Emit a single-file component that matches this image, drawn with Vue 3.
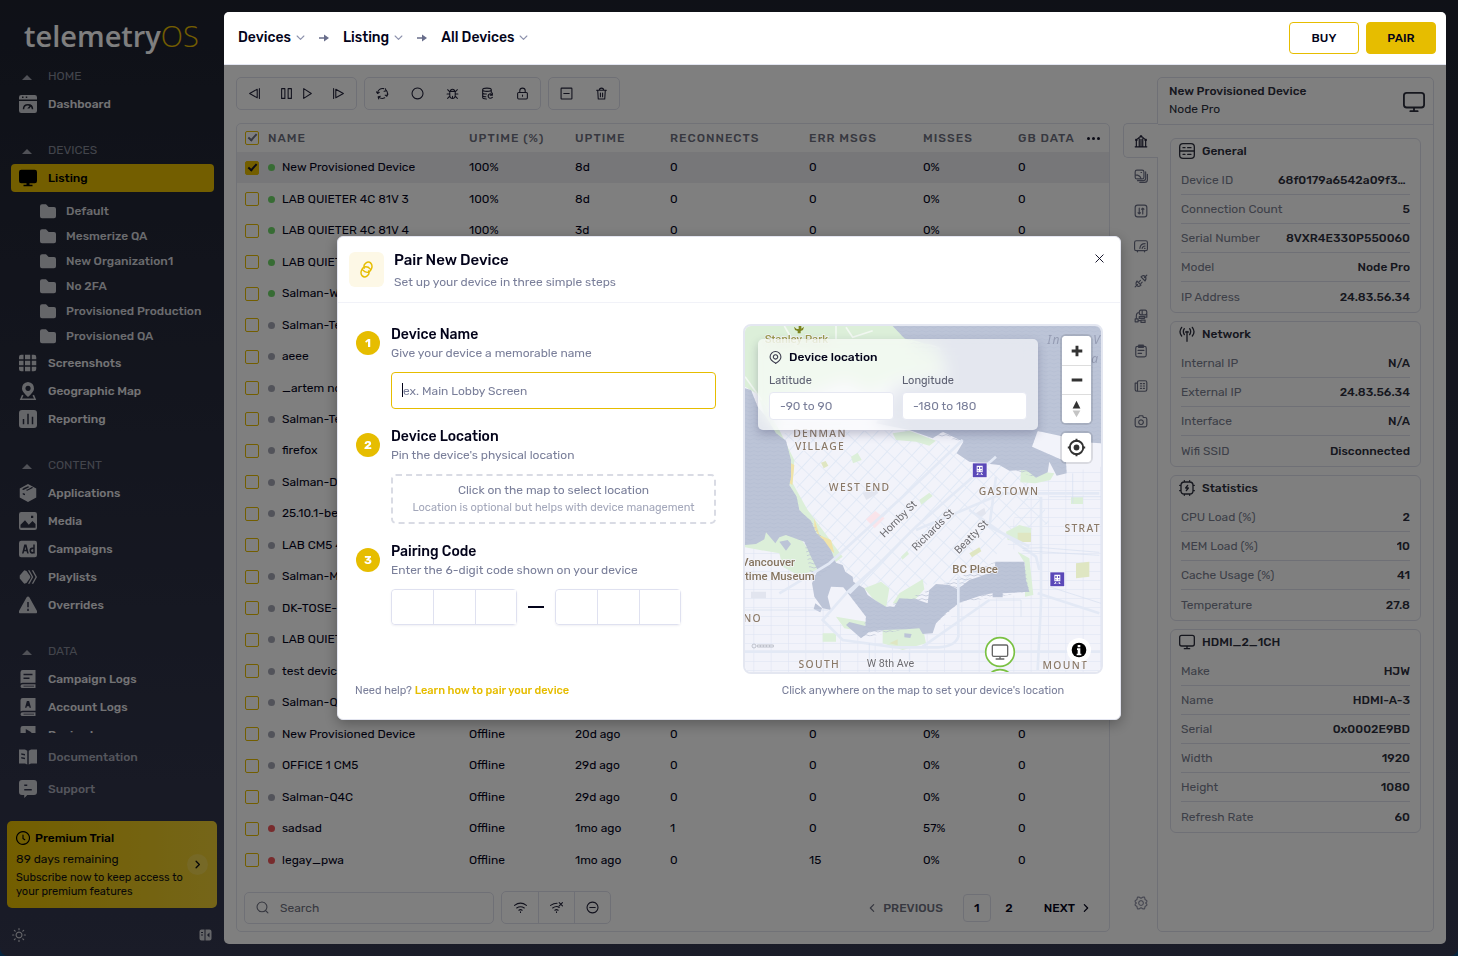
<template>
  <div class="app">
    <aside class="sidebar">
      <a href="#" class="logo">telemetry<span class="logo_os">OS</span></a>
      <nav class="nav">
        <section v-for="group in groups" :key="group.title" class="nav_group">
          <h2 class="nav_title">
            <span class="caret"></span>{{ group.title }}
          </h2>
          <template v-for="item in group.items" :key="item.label">
            <a href="#" class="nav_item" :class="{ active: item.active }">
              <svg class="nav_icon" viewBox="0 0 24 24"><path :d="solid[item.icon]" /></svg>
              {{ item.label }}
            </a>
            <div v-if="item.children" class="nav_children">
              <a v-for="child in item.children" :key="child" href="#" class="nav_child">
                <svg class="folder" viewBox="0 0 24 24"><path :d="solid.folder" /></svg>
                {{ child }}
              </a>
            </div>
          </template>
        </section>
      </nav>
      <div class="nav_bottom">
        <a href="#" class="nav_item muted">
          <svg class="nav_icon" viewBox="0 0 24 24"><path :d="solid.docs" /></svg>
          Documentation
        </a>
        <a href="#" class="nav_item muted">
          <svg class="nav_icon" viewBox="0 0 24 24"><path :d="solid.support" /></svg>
          Support
        </a>
      </div>
      <a href="#" class="trial">
        <span class="trial_text">
          <span class="trial_title">
            <svg class="line_icon trial_clock" viewBox="0 0 24 24"><path :d="line.clock" /></svg>
            Premium Trial
          </span>
          <span class="trial_days">89 days remaining</span>
          <span class="trial_note">Subscribe now to keep access to your premium features</span>
        </span>
        <span class="trial_arrow">
          <svg class="line_icon" viewBox="0 0 24 24"><path d="M9 5l7 7-7 7" /></svg>
        </span>
      </a>
      <div class="sidebar_footer">
        <button class="plain_btn" aria-label="Theme">
          <svg class="line_icon sun" viewBox="0 0 24 24"><path :d="line.sun" /></svg>
        </button>
        <button class="plain_btn" aria-label="Collapse sidebar">
          <svg class="collapse" viewBox="0 0 24 24"><path :d="solid.collapse" /></svg>
        </button>
      </div>
    </aside>

    <main class="main">
      <header class="topbar">
        <div class="crumbs">
          <template v-for="(crumb, i) in ['Devices', 'Listing', 'All Devices']" :key="crumb">
            <svg v-if="i > 0" class="crumb_arrow" viewBox="0 0 12 12"><path d="M1 5.2h5V2.500L11 6 6 9.500V6.800H1z" /></svg>
            <button class="plain_btn crumb">
              {{ crumb }}
              <svg class="line_icon crumb_chevron" viewBox="0 0 24 24"><path d="M3 8l9 9 9-9" /></svg>
            </button>
          </template>
        </div>
        <div class="actions">
          <button class="btn btn_outline">BUY</button>
          <button class="btn">PAIR</button>
        </div>
      </header>

      <div class="content">
        <div class="list_col">
          <div class="toolbar">
            <div v-for="(tools, i) in toolbar" :key="i" class="tool_group">
              <button v-for="tool in tools" :key="tool.join()" class="plain_btn tool" :class="{ wide: tool.length > 1 }" :aria-label="tool.join(' ')">
                <svg v-for="name in tool" :key="name" class="line_icon" viewBox="0 0 24 24"><path :d="line[name]" /></svg>
              </button>
            </div>
          </div>

          <div class="list">
            <div class="table_wrap">
              <table class="table">
                <thead>
                  <tr>
                    <th class="col_check"><input type="checkbox" class="check partial" checked aria-label="Select all"></th>
                    <th>NAME</th>
                    <th class="col_pct">UPTIME (%)</th>
                    <th class="col_up">UPTIME</th>
                    <th class="col_rec">RECONNECTS</th>
                    <th class="col_err">ERR MSGS</th>
                    <th class="col_miss">MISSES</th>
                    <th class="col_gb">GB DATA</th>
                    <th class="col_more">
                      <button class="plain_btn more" aria-label="Columns"><i></i><i></i><i></i></button>
                    </th>
                  </tr>
                </thead>
                <tbody>
                  <tr v-for="(row, i) in devices" :key="i" :class="{ selected: i === 0 }">
                    <td><input type="checkbox" class="check" :checked="i === 0" :aria-label="'Select ' + row[0]"></td>
                    <td><span class="status" :class="row[1]"></span>{{ row[0] }}</td>
                    <td v-for="(cell, c) in row.slice(2)" :key="c">{{ cell }}</td>
                    <td></td>
                  </tr>
                </tbody>
              </table>
            </div>
            <div class="list_footer">
              <label class="search">
                <svg class="line_icon" viewBox="0 0 24 24"><path :d="line.search" /></svg>
                <input type="search" placeholder="Search" aria-label="Search">
              </label>
              <div class="tool_group filters">
                <button v-for="name in ['wifi', 'wifiOff', 'minusCircle']" :key="name" class="plain_btn tool" :aria-label="name">
                  <svg class="line_icon" viewBox="0 0 24 24"><path :d="line[name]" /></svg>
                </button>
              </div>
              <div class="pager">
                <button class="plain_btn prev">
                  <svg class="line_icon" viewBox="0 0 24 24"><path d="M16 4l-8 8 8 8" /></svg>
                  PREVIOUS
                </button>
                <button class="plain_btn page current">1</button>
                <button class="plain_btn page">2</button>
                <button class="plain_btn next">
                  NEXT
                  <svg class="line_icon" viewBox="0 0 24 24"><path d="M8 4l8 8-8 8" /></svg>
                </button>
              </div>
            </div>
          </div>
        </div>

        <div class="detail">
          <div class="tabs">
            <button v-for="(name, i) in tabs" :key="name" class="plain_btn tab" :class="{ active: i === 0 }" :aria-label="name">
              <svg class="line_icon" viewBox="0 0 24 24"><path :d="line[name]" /></svg>
            </button>
            <button class="plain_btn tab tab_last" aria-label="settings">
              <svg class="line_icon" viewBox="0 0 24 24"><path :d="line.gear" /></svg>
            </button>
          </div>
          <div class="panel">
            <div class="panel_head">
              <div>
                <div class="panel_name">New Provisioned Device</div>
                <div class="panel_type">Node Pro</div>
              </div>
              <svg class="line_icon panel_monitor" viewBox="0 0 24 24"><path :d="line.monitor" /></svg>
            </div>
            <div class="cards">
              <section v-for="card in cards" :key="card.title" class="card">
                <h3 class="card_title">
                  <svg class="line_icon" viewBox="0 0 24 24"><path :d="line[card.icon]" /></svg>
                  {{ card.title }}
                </h3>
                <dl class="card_rows">
                  <div v-for="row in card.rows" :key="row[0]" class="card_row">
                    <dt>{{ row[0] }}</dt>
                    <dd>{{ row[1] }}</dd>
                  </div>
                </dl>
              </section>
            </div>
          </div>
        </div>
      </div>
    </main>

    <div class="overlay">
      <div class="modal" role="dialog" aria-labelledby="modal-title">
        <header class="modal_head">
          <span class="modal_icon">
            <svg class="line_icon" viewBox="0 0 24 24"><path :d="line.link" /></svg>
          </span>
          <div class="modal_heading">
            <h1 id="modal-title" class="modal_title">Pair New Device</h1>
            <p class="modal_sub">Set up your device in three simple steps</p>
          </div>
          <button class="plain_btn modal_close" aria-label="Close">
            <svg class="line_icon" viewBox="0 0 24 24"><path d="M4 4l16 16M20 4L4 20" /></svg>
          </button>
        </header>
        <div class="modal_body">
          <div class="steps">
            <section class="step">
              <span class="step_num">1</span>
              <div class="step_main">
                <label class="step_title" for="device-name">Device Name</label>
                <p class="step_sub">Give your device a memorable name</p>
                <div class="name_field">
                  <input id="device-name" v-model="deviceName" type="text" placeholder="ex. Main Lobby Screen">
                </div>
              </div>
            </section>
            <section class="step">
              <span class="step_num">2</span>
              <div class="step_main">
                <h2 class="step_title">Device Location</h2>
                <p class="step_sub">Pin the device's physical location</p>
                <div class="drop">
                  <div class="drop_title">Click on the map to select location</div>
                  <div class="drop_note">Location is optional but helps with device management</div>
                </div>
              </div>
            </section>
            <section class="step">
              <span class="step_num">3</span>
              <div class="step_main">
                <h2 class="step_title">Pairing Code</h2>
                <p class="step_sub">Enter the 6-digit code shown on your device</p>
                <div class="code">
                  <div class="code_group">
                    <input v-for="n in 3" :key="n" type="text" maxlength="1" :aria-label="'Digit ' + n">
                  </div>
                  <span class="code_dash"></span>
                  <div class="code_group">
                    <input v-for="n in 3" :key="n" type="text" maxlength="1" :aria-label="'Digit ' + (n + 3)">
                  </div>
                </div>
              </div>
            </section>
            <p class="help">Need help? <a href="#">Learn how to pair your device</a></p>
          </div>

          <div class="map_col">
            <div class="map">
              <svg class="map_canvas" viewBox="27 48 1068 1038" preserveAspectRatio="xMidYMid slice">
                <defs>
                  <pattern id="waves" width="24" height="12" patternUnits="userSpaceOnUse">
                    <path d="M0 4q6-4 12 0t12 0" fill="none" stroke="#b5bed2" stroke-width="2" />
                  </pattern>
                  <pattern id="diag" width="31" height="42" patternUnits="userSpaceOnUse" patternTransform="rotate(43)">
                    <path d="M0 1h31M1 0v42" fill="none" stroke="#dfe8f5" stroke-width="3" />
                  </pattern>
                  <pattern id="ortho" width="52" height="27" patternUnits="userSpaceOnUse">
                    <path d="M0 1h52M1 0v27" fill="none" stroke="#dfe5f3" stroke-width="2" />
                  </pattern>
                </defs>
                <rect x="27" y="48" width="1068" height="1038" fill="#f2f3fa" />
                <path d="M27 700L130 690 230 760 280 920 380 985 600 970 680 880 880 850 870 750 800 690 900 500 1095 470V1086H27z" fill="url(#ortho)" />
                <path d="M120 370L520 360 680 420 900 510 940 640 800 690 770 760 670 830 580 820 450 890 340 800 300 740 190 570 165 450z" fill="url(#diag)" />
                <g fill="#dcefd9">
                  <path d="M27 48H480L610 120 630 190 480 210 400 250 330 210 100 300 60 250 27 230z" />
                  <path d="M60 240L130 360 175 450 170 520 215 600 320 740 300 755 190 600 150 500 110 380z" />
                  <path d="M27 700L120 640 190 680 240 750 250 780 185 795 140 770 130 730 27 712z" />
                  <path d="M470 370l50-8 80 30-20 15-40-12-60-5zM855 478l100 12-12 20-45 10-45-3zM385 835l50-20 25 20-10 60-40-30zM470 880l20-30 70-42 5 30-40 45zM440 955l120-5 10 50-70 20-60-20zM845 725l35 20 12 110-25 5 0-100zM300 920l90 15-5 30-60-10zM550 570l30-22 10 10-34 26zM495 740l18-17 6 9-20 17zM1005 562h36v20h-36zM260 970h40v25h-40zM810 665l40-20 35 10v40l-70-5zM345 440l20-12 12 22-26 10z" />
                </g>
                <path d="M235 625l15 50 35 15 10 40-30-25-30-50zM165 460l10 5-6 60-8-5z" fill="#f0e3a9" />
                <path d="M845 668h40v28h-40zM1020 760l40-5v45l-40 5zM700 730l30-18 6 12-28 18zM255 458l14-5 8 14-14 8zM460 1000l25-12v18z" fill="#dfe6c2" />
                <path d="M390 628l28-25 28 22-30 30z" fill="#fae4ea" />
                <path d="M715 613l30-20 5 18-22 14zM380 550l38-20 8 20-35 20zM45 845h45v20H45zM720 845h30v12h-30z" fill="#e2e5ef" />
                <g id="water">
                  <path d="M27 235L45 240 65 290 90 320 120 370 150 392 165 450V500L160 525 182 560 190 600 205 615 225 632 240 668 265 692 285 720 300 758 320 765 328 785 350 800 352 815 385 835 395 855 420 872 450 890H475L490 865 540 868 575 880 580 840 600 822 640 825 665 838 700 810 775 785 778 755H865L870 810 880 845 800 850V862H770V850L740 855 670 878 630 910 600 940 590 970 560 972 550 955 510 958 440 960 400 965 375 985 330 945 340 936 388 948 390 920 322 832 285 830 275 860 285 900 260 895 235 860 228 820 245 780 225 740 205 695 150 675 130 682 118 700 90 667 85 688 60 702 27 705z" fill="#bcc4d7" />
                  <path d="M470 48H1095V400L1068 398 905 363 888 410 990 455 992 490 962 497 940 455 935 487 900 503 870 480 820 482 790 465 700 455 662 430 682 395 620 365 590 385 520 360 420 340 480 230 640 200 610 110 505 85z" fill="#bcc4d7" />
                  <path d="M27 235L45 240 65 290 90 320 120 370 150 392 165 450V500L160 525 182 560 190 600 225 632 265 692 300 758 228 820 205 695 150 675 90 667 27 705zM470 48H1095V400L905 363 888 410 990 455 992 490 940 455 900 503 790 465 700 455 682 395 520 360 480 230 640 200 505 85zM450 890L580 840 778 755H865L880 845 670 878 600 940 375 985 390 920 322 832z" fill="url(#waves)" />
                  <path d="M130 695l25-5 10 12-15 20zM505 970l22 2-4 12-18-2zM238 880l20 15-5 12-20-10z" fill="#bcc4d7" />
                </g>
                <g fill="none" stroke="#e3e9f5" stroke-width="8">
                  <path d="M130 850l150-90 220-200 180-170M340 850l200-200 240-210M667 800v180q-10 30-60 32H480L320 990 260 930 330 850 420 770M915 560v320l-10 200M700 600l200 140 10 40M780 500l-20 150 120 60M905 850l185 60M760 870L560 1010M540 660l260-110h290M27 1025h1068" />
                </g>
                <g fill="none" stroke="#d7dff0" stroke-width="2">
                  <path d="M27 900h250M860 715l60-2 170 14M860 722l230 14M940 830l155 50M520 1025v60M1010 490v90M940 560h155M400 1000v86M760 870h95v50" />
                </g>
                <path d="M145 48l35 60 30 15M27 200l50 70M300 48v40M330 52l20 30 60-20" fill="none" stroke="#f2f8f2" stroke-width="5" />
                <g class="map_area" text-anchor="middle">
                  <text x="252" y="381">DENMAN</text>
                  <text x="252" y="419">VILLAGE</text>
                  <text x="371" y="542">WEST END</text>
                  <text x="819" y="555">GASTOWN</text>
                  <text x="1040" y="666">STRAT</text>
                  <text x="50" y="936">NO</text>
                  <text x="250" y="1075">SOUTH</text>
                  <text x="988" y="1078">MOUNT</text>
                </g>
                <g class="map_place">
                  <text x="86" y="98" class="map_park">Stanley Park</text>
                  <text x="16" y="767">Vancouver</text>
                  <text x="27" y="810">time Museum</text>
                  <text x="649" y="790">BC Place</text>
                </g>
                <g class="map_street">
                  <text transform="translate(445 684) rotate(-45)">Hornby St</text>
                  <text transform="translate(541 724) rotate(-45)">Richards St</text>
                  <text transform="translate(668 733) rotate(-45)">Beatty St</text>
                  <text x="392" y="1071">W 8th Ave</text>
                </g>
                <g class="map_water">
                  <text x="934" y="101">In</text>
                  <text x="1072" y="101">V</text>
                  <text x="1066" y="160">a</text>
                </g>
                <path d="M174 50l8 7h6V48h8v8l8-6-3 10-7 3v7h-9v-7l-8-3z" fill="#7c8420" />
                <g v-for="pin in [[709, 459], [942, 786]]" :key="pin[0]" :transform="`translate(${pin})`">
                  <rect width="44" height="44" fill="#5a48b8" stroke="#fff" stroke-width="2" />
                  <path d="M13 8h18v20H13zM16 12v6h4v-6zm8 0v6h4v-6zm-8 10v3h3v-3zm9 0v3h3v-3zM12 36l4-6h3l-2 3h10l-2-3h3l4 6h-4l-1-2H17l-1 2z" fill="#fff" fill-rule="evenodd" />
                </g>
                <circle cx="792" cy="1122" r="43" fill="#fff" stroke="#7ac142" stroke-width="5" />
                <circle cx="792" cy="1026" r="43" fill="#fff" stroke="#7ac142" stroke-width="5" />
                <path d="M773 1005h38q4 0 4 4v26q0 4-4 4h-38q-4 0-4-4v-26q0-4 4-4zM792 1039v8M779 1047h26" fill="none" stroke="#666" stroke-width="4" />
                <g fill="none" stroke="#a9adb8" stroke-width="2">
                  <circle cx="54" cy="1008" r="6" />
                  <path d="M64 1005h48v6H64zM73 1005v6M82 1005v6M91 1005v6M101 1005v6" />
                </g>
                <circle cx="1029" cy="1020" r="36" fill="#fff" />
                <circle cx="1029" cy="1020" r="22" />
                <path d="M1025 1005h8v7h-8zM1023 1015h10v16h3v5h-14v-5h3v-11h-2z" fill="#fff" />
              </svg>
              <div class="coords">
                <div class="coords_title">
                  <svg class="line_icon" viewBox="0 0 24 24"><path :d="line.pin" /></svg>
                  Device location
                </div>
                <div class="coords_row">
                  <label>Latitude<input type="text" placeholder="-90 to 90"></label>
                  <label>Longitude<input type="text" placeholder="-180 to 180"></label>
                </div>
              </div>
              <div class="map_controls">
                <div class="map_group">
                  <button aria-label="Zoom in"><svg viewBox="0 0 30 29"><path d="M14 9h3v4h4v3h-4v4h-3v-4h-4v-3h4z" /></svg></button>
                  <button aria-label="Zoom out"><svg viewBox="0 0 30 29"><path d="M10 13h11v3H10z" /></svg></button>
                  <button aria-label="Reset north"><svg viewBox="0 0 30 29"><path d="M11 14l4-8 4 8z" /><path d="M11 16l4 7 4-7z" fill="#c4c4c4" /></svg></button>
                </div>
                <div class="map_group">
                  <button aria-label="Find my location">
                    <svg viewBox="0 0 30 29">
                      <circle cx="15" cy="14" r="7" fill="none" stroke="#333" stroke-width="2" />
                      <circle cx="15" cy="14" r="3" />
                      <path d="M14 5h2v3h-2zM14 20h2v3h-2zM6 13h3v2H6zM21 13h3v2h-3z" />
                    </svg>
                  </button>
                </div>
              </div>
            </div>
            <p class="map_hint">Click anywhere on the map to set your device's location</p>
          </div>
        </div>
      </div>
    </div>
  </div>
</template>

<script setup>
import { ref } from 'vue'

const deviceName = ref('')

const groups = [
  { title: 'HOME', items: [{ label: 'Dashboard', icon: 'dashboard' }] },
  {
    title: 'DEVICES',
    items: [
      {
        label: 'Listing',
        icon: 'monitor',
        active: true,
        children: ['Default', 'Mesmerize QA', 'New Organization1', 'No 2FA', 'Provisioned Production', 'Provisioned QA']
      },
      { label: 'Screenshots', icon: 'grid' },
      { label: 'Geographic Map', icon: 'map' },
      { label: 'Reporting', icon: 'report' }
    ]
  },
  {
    title: 'CONTENT',
    items: [
      { label: 'Applications', icon: 'box' },
      { label: 'Media', icon: 'media' },
      { label: 'Campaigns', icon: 'ad' },
      { label: 'Playlists', icon: 'playlist' },
      { label: 'Overrides', icon: 'warning' }
    ]
  },
  {
    title: 'DATA',
    items: [
      { label: 'Campaign Logs', icon: 'book' },
      { label: 'Account Logs', icon: 'bookA' },
      { label: 'Device Logs', icon: 'bookPlay' }
    ]
  }
]

const toolbar = [
  [['back'], ['pause', 'play'], ['forward']],
  [['refresh'], ['circle'], ['bug'], ['database'], ['lock']],
  [['minusSquare'], ['trash']]
]

const devices = [
  ['New Provisioned Device', 'online', '100%', '8d', 0, 0, '0%', 0],
  ['LAB QUIETER 4C 81V 3', 'online', '100%', '8d', 0, 0, '0%', 0],
  ['LAB QUIETER 4C 81V 4', 'online', '100%', '3d', 0, 0, '0%', 0],
  ['LAB QUIETER', 'online'],
  ['Salman-Web', 'online'],
  ['Salman-Test', 'idle'],
  ['aeee', 'idle'],
  ['_artem node', 'idle'],
  ['Salman-Test', 'idle'],
  ['firefox', 'idle'],
  ['Salman-Dev', 'idle'],
  ['25.10.1-beta', 'idle'],
  ['LAB CM5 4', 'idle'],
  ['Salman-Mini', 'idle'],
  ['DK-TOSE-1', 'idle'],
  ['LAB QUIETER', 'idle'],
  ['test device', 'idle'],
  ['Salman-Q4C', 'idle'],
  ['New Provisioned Device', 'idle', 'Offline', '20d ago', 0, 0, '0%', 0],
  ['OFFICE 1 CM5', 'idle', 'Offline', '29d ago', 0, 0, '0%', 0],
  ['Salman-Q4C', 'idle', 'Offline', '29d ago', 0, 0, '0%', 0],
  ['sadsad', 'error', 'Offline', '1mo ago', 1, 0, '57%', 0],
  ['legay_pwa', 'error', 'Offline', '1mo ago', 0, 15, '0%', 0]
]

const tabs = ['stats', 'gallery', 'sliders', 'cast', 'plug', 'flow', 'clipboard', 'news', 'camera']

const cards = [
  {
    title: 'General',
    icon: 'server',
    rows: [['Device ID', '68f0179a6542a09f3c21'], ['Connection Count', 5], ['Serial Number', '8VXR4E330P550060'], ['Model', 'Node Pro'], ['IP Address', '24.83.56.34']]
  },
  {
    title: 'Network',
    icon: 'antenna',
    rows: [['Internal IP', 'N/A'], ['External IP', '24.83.56.34'], ['Interface', 'N/A'], ['Wifi SSID', 'Disconnected']]
  },
  {
    title: 'Statistics',
    icon: 'chip',
    rows: [['CPU Load (%)', 2], ['MEM Load (%)', 10], ['Cache Usage (%)', 41], ['Temperature', 27.8]]
  },
  {
    title: 'HDMI_2_1CH',
    icon: 'monitor',
    rows: [['Make', 'HJW'], ['Name', 'HDMI-A-3'], ['Serial', '0x0002E9BD'], ['Width', 1920], ['Height', 1080], ['Refresh Rate', 60]]
  }
]

const solid = {
  dashboard: 'M3 0h18q3 0 3 3v3H0V3q0-3 3-3zM4 2v2h2V2zm5 0v2h2V2zM0 8h24v13q0 3-3 3H3q-3 0-3-3zM5 19h2q0-5 5-5 1 0 2 .5L11 18h3l1.500-2.500q1.500 1 1.500 3.500h2q0-7-7-7t-7 7z',
  monitor: 'M3 1h18q3 0 3 3v12q0 3-3 3h-7v2h4v2H6v-2h4v-2H3q-3 0-3-3V4q0-3 3-3z',
  folder: 'M3 2h6l4 4h8q3 0 3 3v11q0 3-3 3H3q-3 0-3-3V5q0-3 3-3z',
  grid: 'M3 1h3v6H0V4q0-3 3-3zM8 1h7v6H8zM17 1h3q3 0 3 3v3h-6zM0 9h6v6H0zM8 9h7v6H8zM17 9h6v6h-6zM0 17h6v6H3q-3 0-3-3zM8 17h7v6H8zM17 17h6v3q0 3-3 3h-3z',
  map: 'M12 0q8 1 8 9 0 4-8 11-8-7-8-11 0-8 8-9zM12 5a3.500 3.500 0 1 0 .1 0zM4 17l2 1-2 4h16l-2-4 2-1 3 7H1z',
  report: 'M4 0h16q4 0 4 4v16q0 4-4 4H4q-4 0-4-4V4q0-4 4-4zM5 12v7h2v-7zM11 5v14h2V5zM17 9v10h2V9z',
  box: 'M12 0l11 6v12l-11 6L1 18V6zM7 5l-3 2 2 1 8-4-2-1zM12 7l-3 1 2 1 8-4-2-1zM5 12v2l3 1v-2z',
  media: 'M3 0h18q3 0 3 3v18q0 3-3 3H3q-3 0-3-3V3q0-3 3-3zM2 17v4h20v-5l-4-4-5 5-5-6zM16 5v3h3V5z',
  ad: 'M3 1h18q3 0 3 3v16q0 3-3 3H3q-3 0-3-3V4q0-3 3-3zM4 18h2l1-3h3l1 3h2L10 6H7zM7.500 13l1-4 1 4zM19 6v4q-5-1-5 4t5 4h2V6zM19 12v4q-3 0-3-2t3-2z',
  playlist: 'M7 3l3 1 5 7v2l-5 7-3 1-6-7v-4zM12 3h2l5 9-5 9h-2l5-9zM17 3h2l5 9-5 9h-2l5-9z',
  warning: 'M10 2q2-3 4 0l10 18q1 3-2 3H2q-3 0-2-3zM11 8v7h2V8zM11 17v3h2v-3z',
  book: 'M5 0h17v17H5q-2 0-3 1V3q0-3 3-3zM6 5v2h12V5zM6 10v2h8v-2zM5 19h17v5H5q-3 0-3-2.500T5 19zM6 21v1h14v-1z',
  bookA: 'M5 0h17v17H5q-2 0-3 1V3q0-3 3-3zM8 13h2l.5-2h3l.5 2h2L13.500 4h-3zM5 19h17v5H5q-3 0-3-2.500T5 19zM6 21v1h14v-1z',
  bookPlay: 'M5 0h17v17H5q-2 0-3 1V3q0-3 3-3zM9 4v9l8-4.500zM5 19h17v5H5q-3 0-3-2.500T5 19zM6 21v1h14v-1z',
  docs: 'M0 2h8l3 1.500V22l-3-1.500H0zM24 2h-8l-3 1.500V22l3-1.500h8zM3 7v2l5 1V8zM3 12v2l5 1v-2z',
  support: 'M4 0h16q4 0 4 4v12q0 4-4 4h-9l-4 4v-4H4q-4 0-4-4V4q0-4 4-4zM7 6v2h4V6zM7 12v2h10v-2z',
  collapse: 'M4 1h6v22H4q-4 0-4-4V5q0-4 4-4zM3 6v2h4V6zm0 5v2h4v-2zM12 1h8q4 0 4 4v14q0 4-4 4h-8zM20 7l-5 5 5 5z'
}

const line = {
  clock: 'M12 1a11 11 0 1 0 .1 0zM12 7v6l3 2',
  sun: 'M12 7a5 5 0 1 0 .1 0zM12 1v2M12 21v2M1 12h2M21 12h2M4 4l1.500 1.500M18.500 18.500L20 20M4 20l1.500-1.500M18.500 5.500L20 4',
  back: 'M17 4L3 12l14 8zM21 3v18',
  forward: 'M7 4l14 8-14 8zM3 3v18',
  pause: 'M3 3h6v18H3zM15 3h6v18h-6z',
  play: 'M5 3l14 9-14 9z',
  refresh: 'M3 11a9 9 0 0 1 11-8M19 6a9 9 0 0 1 1 10M16 20a9 9 0 0 1-11-2M1 9l2 3 3-2M17 3l2 4-4 1M8 17l-4 1 1 4M22 13l-2 4-3-2',
  circle: 'M12 2a10 10 0 1 0 .1 0z',
  bug: 'M8 8q0-4 4-4t4 4M7 8h10v7q0 6-5 6t-5-6zM12 17v4M2 13h5M17 13h5M3 5l4 4M21 5l-4 4M3 21l4-4M21 21l-4-4',
  database: 'M3 5q0-3 8-3t8 3-8 3-8-3v14q0 3 7 3M19 5v5M3 10q0 3 7 3M3 15q0 3 6 3M21 14q-4-3-7 0-2 4 1 6 3 2 6-1M21 11v4h-4',
  lock: 'M5 10h14q2 0 2 2v8q0 2-2 2H5q-2 0-2-2v-8q0-2 2-2zM7 10V7q0-5 5-5t5 5v3M12 15v2',
  minusSquare: 'M3 2h18q1 0 1 1v18q0 1-1 1H3q-1 0-1-1V3q0-1 1-1zM7 12h10',
  minusCircle: 'M12 2a10 10 0 1 0 .1 0zM7 12h10',
  trash: 'M3 6h18M5 6l1 16h12l1-16M8 6q0-4 4-4t4 4M10 11v7M14 11v7',
  search: 'M11 2a9 9 0 1 0 .1 0zM18 18l4 4',
  wifi: 'M1 8q11-8 22 0M5 13q7-5 14 0M9 17q3-2 6 0M12 20v1',
  wifiOff: 'M1 8q6-4 12-4M5 13q7-5 12-1M9 17q3-2 6 0M12 20v1M17 3l6 6M23 3l-6 6',
  monitor: 'M4 2h16q3 0 3 3v10q0 3-3 3H4q-3 0-3-3V5q0-3 3-3zM12 18v4M8 22h8',
  server: 'M6 1h12q5 0 5 5v12q0 5-5 5H6q-5 0-5-5V6q0-5 5-5zM1 12h22M6 7h3M13 7h5M6 17h3M13 17h5',
  antenna: 'M12 9v14M12 8v2M8 4q-3 4 0 9M16 4q3 4 0 9M4 2q-5 7 0 13M20 2q5 7 0 13M10 9h4',
  chip: 'M8 3h8q5 0 5 5v8q0 5-5 5H8q-5 0-5-5V8q0-5 5-5zM8 1v2M16 1v2M8 21v2M16 21v2M1 8h2M1 16h2M21 8h2M21 16h2M13 8l-3 4h4l-3 4',
  stats: 'M2 22h20M4 21V11M20 21V11M9 21V8M15 21V8M12 21V9M4 10l7-6M13 4l7 6M3 9h2v2H3zM11 3h2v2h-2zM19 9h2v2h-2z',
  gallery: 'M5 2h9q3 0 3 3v9q0 3-3 3H5q-3 0-3-3V5q0-3 3-3zM2 10q9 0 10 7M20 5v11q0 4-4 4H6M23 9v9q0 5-5 5h-8M12 6h1',
  sliders: 'M6 2h12q4 0 4 4v12q0 4-4 4H6q-4 0-4-4V6q0-4 4-4zM9 7v10M15 7v10M7 15l2 2 2-2M13 9l2-2 2 2',
  cast: 'M4 3h16q3 0 3 3v11q0 3-3 3H4q-3 0-3-3V6q0-3 3-3zM6 20v2M18 20v2M10 16q1-8 9-8M14 16q1-4 5-4M18 16h1',
  plug: 'M2 22l4-4M5 12l7 7q-4 4-7 1t0-8zM9 13l2-2M12 16l2-2M22 2l-4 4M19 12l-7-7q4-4 7-1t0 8z',
  flow: 'M12 2h7q3 0 3 4t-3 4h-7q-3 0-3-4t3-4zM14 2v8M9 6Q4 6 4 12v3M9 13h9v3H9zM2 17h5v5H2zM12 19h7v4h-7zM22 8v6h-3M7 20h5',
  clipboard: 'M6 4h12q3 0 3 3v12q0 3-3 3H6q-3 0-3-3V7q0-3 3-3zM8 2h8v4H8zM7 11h10M7 16h6',
  news: 'M9 3h10q3 0 3 3v12q0 3-3 3H5q-3 0-3-3V7h4V5q0-2 3-2zM6 7v14M11 8h2M16 8h2M11 12h2M16 12h2M11 16h2M16 16h2',
  camera: 'M5 6h3l1-3h6l1 3h3q3 0 3 3v10q0 3-3 3H5q-3 0-3-3V9q0-3 3-3zM12 10a4 4 0 1 0 .1 0z',
  gear: 'M6 2h3l3 2 3-2h3l1 4 3 2v2l-2 2 2 2v2l-3 2-1 4h-3l-3-2-3 2H6l-1-4-3-2v-2l2-2-2-2V8l3-2zM12 8a4 4 0 1 0 .1 0z',
  link: 'M9 10q-2-4 2-7 4-3 7 0t1 8q-2 5-6 5t-6-3M15 14q2 4-2 7-4 3-7 0t-1-8q2-5 6-5t6 3',
  pin: 'M12 22Q2 17 2 11a10 10 0 0 1 20 0q0 6-10 12zM12 7a4 4 0 1 0 .1 0z'
}
</script>

<style>
body {
  margin: 0;
  background-color: #0b4a80;
}
</style>

<style scoped>
.app {
  display: flex;
  height: 100vh;
  min-height: 720px;
  background: linear-gradient(#1e222f, #343850);
  border-radius: 0 0 8px 8px;
  font-family: Rubik, Roboto, "Liberation Sans", sans-serif;
  font-size: 12px;
  color: #03031a;
  box-sizing: border-box;
}

.app *,
.app *::before {
  box-sizing: border-box;
}

h1, h2, h3, p, dl, dd {
  margin: 0;
}

a {
  color: inherit;
  text-decoration: none;
}

input {
  font-family: inherit;
}

.plain_btn {
  border: 0;
  padding: 0;
  background: none;
  font: inherit;
  color: inherit;
  display: flex;
  align-items: center;
  justify-content: center;
}

.line_icon {
  width: 14px;
  height: 14px;
  flex: none;
  fill: none;
  stroke: currentColor;
  stroke-width: 2;
  stroke-linecap: round;
  stroke-linejoin: round;
}

.sidebar {
  width: 224px;
  flex: none;
  display: flex;
  flex-direction: column;
}

.logo {
  flex: none;
  height: 62px;
  padding: 14px 0 0 24px;
  line-height: 44px;
  font-family: "Open Sans", sans-serif;
  font-size: 29px;
  font-weight: 600;
  color: #fff;
}

.logo_os {
  font-weight: 300;
  color: #e6bd00;
}

.nav {
  flex: 1;
  min-height: 0;
  overflow: hidden;
  padding: 0 10px 0 11px;
}

.nav_group {
  margin-bottom: 18px;
}

.nav_title {
  display: flex;
  align-items: center;
  height: 28px;
  font-size: 12px;
  font-weight: 400;
  color: #868a99;
}

.caret {
  margin: 2px 16px 0 11px;
  border: 5px solid transparent;
  border-top: 0;
  border-bottom-color: #a0a3ae;
}

.nav_item {
  display: flex;
  align-items: center;
  height: 28px;
  gap: 11px;
  padding-left: 8px;
  border-radius: 4px;
  font-weight: 500;
  color: #e6e6ea;
}

.nav_icon {
  width: 18px;
  height: 18px;
  flex: none;
  fill: #cbccd3;
  fill-rule: evenodd;
}

.nav_item.active {
  background-color: #e6bd00;
  color: #000;
}

.nav_item.active .nav_icon {
  fill: #000;
}

.nav_children {
  padding: 6px 0 1px 29px;
}

.nav_child {
  display: flex;
  align-items: center;
  height: 25px;
  gap: 10px;
  font-weight: 500;
  color: #d5d6dc;
}

.folder {
  width: 16px;
  height: 16px;
  fill: #cbccd3;
}

.nav_bottom {
  padding: 8px 10px 16px 11px;
}

.nav_item.muted {
  height: 32px;
  color: #a8abb9;
}

.trial {
  display: flex;
  align-items: center;
  margin: 0 7px;
  padding: 8px 9px 9px;
  border-radius: 5px;
  background: linear-gradient(90deg, #e6bd00, #eacb32);
  color: #111;
}

.trial_text {
  flex: 1;
}

.trial_title,
.trial_days,
.trial_note {
  display: flex;
  align-items: center;
}

.trial_title {
  gap: 5px;
  height: 18px;
  font-weight: 500;
  color: #000;
}

.trial_days {
  height: 24px;
}

.trial_note {
  font-size: 11px;
  line-height: 14px;
}

.trial_arrow {
  display: flex;
  align-items: center;
  justify-content: center;
  width: 21px;
  height: 21px;
  border-radius: 50%;
  background-color: rgba(255, 255, 255, 0.15);
}

.trial_arrow .line_icon {
  width: 11px;
  height: 11px;
  stroke-width: 3;
}

.sidebar_footer {
  display: flex;
  align-items: center;
  justify-content: space-between;
  height: 48px;
  padding: 5px 12px 0;
  color: #cbccd3;
}

.collapse {
  width: 13px;
  height: 12px;
  fill: #cbccd3;
  fill-rule: evenodd;
}

.main {
  flex: 1;
  min-width: 0;
  display: flex;
  flex-direction: column;
  margin: 12px 12px 12px 0;
  background-color: #fff;
  border-radius: 5px;
}

.topbar {
  position: relative;
  z-index: 2;
  display: flex;
  align-items: center;
  justify-content: space-between;
  height: 53px;
  flex: none;
  padding: 0 10px 0 14px;
  background-color: #fff;
  border-bottom: 1px solid #e3e5f0;
  border-radius: 5px 5px 0 0;
}

.crumbs {
  display: flex;
  align-items: center;
  gap: 13px;
  padding-bottom: 1px;
}

.crumb {
  gap: 5px;
  font-size: 14px;
  font-weight: 500;
}

.crumb_chevron {
  width: 9px;
  height: 9px;
  stroke-width: 3;
  color: #8d92ad;
}

.crumb_arrow {
  width: 12px;
  height: 12px;
  fill: #686d8b;
}

.actions {
  display: flex;
  gap: 7px;
}

.btn {
  width: 70px;
  height: 32px;
  border: 1px solid #e6bd00;
  border-radius: 4px;
  background-color: #e6bd00;
  font-family: inherit;
  font-size: 12px;
  font-weight: 500;
  color: #03031a;
}

.btn_outline {
  background-color: #fff;
}

.content {
  flex: 1;
  min-height: 0;
  display: flex;
  gap: 13px;
  padding: 12px;
}

.list_col {
  flex: 1;
  min-width: 0;
  display: flex;
  flex-direction: column;
  gap: 13px;
}

.toolbar {
  display: flex;
  gap: 7px;
}

.tool_group {
  display: flex;
  height: 33px;
  border: 1px solid #dfe1ec;
  border-radius: 5px;
  color: #23233a;
}

.tool {
  width: 35px;
}

.tool.wide {
  width: 49px;
  gap: 8px;
}

.tool .line_icon {
  width: 13px;
  height: 13px;
}

.list {
  flex: 1;
  min-height: 0;
  display: flex;
  flex-direction: column;
  border: 1px solid #e3e5ef;
  border-radius: 5px;
}

.table_wrap {
  flex: 1;
  min-height: 0;
}

.table {
  width: 100%;
  height: 100%;
  table-layout: fixed;
  border-collapse: collapse;
}

.table th {
  height: 28px;
  padding: 0;
  text-align: left;
  font-weight: 500;
  letter-spacing: 1px;
  white-space: nowrap;
  color: #6e7080;
}

.table td {
  padding: 0 0 1px;
  line-height: 20px;
  white-space: nowrap;
}

.table th:first-child,
.table td:first-child {
  padding: 0 0 0 8px;
}

.col_check {
  width: 31px;
}

.col_pct {
  width: 106px;
}

.col_up {
  width: 95px;
}

.col_rec {
  width: 139px;
}

.col_err {
  width: 114px;
}

.col_miss {
  width: 95px;
}

.col_gb {
  width: 69px;
}

.col_more {
  width: 22px;
}

.more {
  gap: 2px;
}

.more i {
  width: 3px;
  height: 3px;
  border-radius: 50%;
  background-color: #16162b;
}

.selected {
  background-color: #eeeef2;
}

.check {
  appearance: none;
  display: block;
  width: 14px;
  height: 14px;
  margin: 0;
  border: 1px solid #e6bd00;
  border-radius: 2px;
}

.check:checked {
  background-color: #e6bd00;
}

.check:checked::before {
  content: "";
  display: block;
  width: 5px;
  height: 9px;
  margin: 0 0 0 4px;
  border: solid #16162b;
  border-width: 0 2px 2px 0;
  transform: rotate(42deg);
}

.check.partial:checked {
  background-color: transparent;
}

.check.partial:checked::before {
  border-color: #6e7080;
}

.status {
  display: inline-block;
  width: 7px;
  height: 7px;
  margin-right: 7px;
  border-radius: 50%;
}

.online {
  background-color: #6fd868;
}

.idle {
  background-color: #a5a7b4;
}

.error {
  background-color: #f0575a;
}

.list_footer {
  display: flex;
  align-items: center;
  padding: 15px 12px 7px 7px;
}

.search {
  display: flex;
  align-items: center;
  gap: 11px;
  width: 250px;
  height: 32px;
  margin-right: 7px;
  padding: 0 11px;
  border: 1px solid #dfe1ec;
  border-radius: 5px;
  color: #6e7080;
}

.search .line_icon {
  width: 13px;
  height: 13px;
}

.search input {
  flex: 1;
  min-width: 0;
  border: 0;
  padding: 0;
  outline: 0;
  background: none;
  font-size: 12px;
}

.search input::placeholder {
  color: #6e7080;
}

.filters .tool + .tool {
  border-left: 1px solid #dfe1ec;
}

.filters .tool {
  width: 36px;
}

.pager {
  display: flex;
  align-items: center;
  margin-left: auto;
  font-weight: 500;
}

.pager .line_icon {
  width: 10px;
  height: 10px;
  stroke-width: 3;
}

.prev {
  gap: 6px;
  margin-right: 20px;
  color: #6e7080;
}

.page {
  width: 28px;
  height: 28px;
  margin-right: 4px;
  border-radius: 4px;
}

.page.current {
  border: 1px solid #dfe1ec;
}

.next {
  gap: 6px;
  margin: 0 6px 0 17px;
}

.detail {
  flex: none;
  display: flex;
  width: 311px;
}

.tabs {
  display: flex;
  flex-direction: column;
  width: 34px;
  padding: 46px 0 12px;
}

.tab {
  width: 35px;
  height: 35px;
  color: #6b6f85;
}

.tab.active {
  position: relative;
  border: 1px solid #dfe1ec;
  border-right: 0;
  border-radius: 5px 0 0 5px;
  background-color: #fff;
  color: #23233a;
}

.tab_last {
  margin-top: auto;
  color: #9092a6;
}

.panel {
  flex: 1;
  min-width: 0;
  border: 1px solid #dfe1ec;
  border-radius: 5px;
}

.panel_head {
  display: flex;
  align-items: center;
  justify-content: space-between;
  height: 47px;
  padding: 0 8px 2px 11px;
  border-bottom: 1px solid #dfe1ec;
  line-height: 18px;
  color: #2d2f3d;
}

.panel_name {
  font-weight: 500;
}

.panel_monitor {
  width: 22px;
  height: 22px;
  margin-top: 4px;
}

.cards {
  display: flex;
  flex-direction: column;
  gap: 8px;
  padding: 13px 12px;
}

.card {
  padding: 0 10px 1px;
  border: 1px solid #dfe1ec;
  border-radius: 6px;
}

.card_title {
  display: flex;
  align-items: center;
  gap: 7px;
  height: 27px;
  padding-bottom: 3px;
  margin-left: -2px;
  font-size: 12px;
  font-weight: 500;
  color: #2d2f3d;
}

.card_title .line_icon {
  width: 16px;
  height: 16px;
}

.card_row {
  display: flex;
  align-items: center;
  justify-content: space-between;
  height: 29px;
  border-bottom: 1px solid #dfe1ec;
  white-space: nowrap;
}

.card_row:last-child {
  border-bottom: 0;
}

.card_row dt {
  color: #7a7e90;
}

.card_row dd {
  max-width: 132px;
  overflow: hidden;
  text-overflow: ellipsis;
  font-weight: 500;
  color: #2d2f3d;
}

.overlay {
  position: fixed;
  inset: 0;
  z-index: 1;
  display: flex;
  align-items: center;
  justify-content: center;
  background-color: rgba(0, 0, 0, 0.5);
}

.modal {
  width: 784px;
  border-radius: 6px;
  border: 1px solid #e3e5f0;
  background-color: #fff;
  box-shadow: 0 4px 14px rgba(0, 0, 0, 0.3);
}

.modal_head {
  display: flex;
  align-items: center;
  gap: 10px;
  height: 66px;
  padding: 0 11px;
  border-bottom: 1px solid #f1f2f8;
}

.modal_icon {
  display: flex;
  align-items: center;
  justify-content: center;
  width: 35px;
  height: 35px;
  border-radius: 6px;
  background-color: #fdf8e6;
  color: #e6bd00;
}

.modal_icon .line_icon {
  width: 17px;
  height: 17px;
}

.modal_heading {
  padding-top: 3px;
  line-height: 22px;
}

.modal_title {
  font-size: 15px;
  font-weight: 500;
}

.modal_sub {
  color: #7a7f9a;
}

.modal_close {
  align-self: flex-start;
  width: 22px;
  height: 22px;
  margin: 10px -1px 0 auto;
}

.modal_close .line_icon {
  width: 11px;
  height: 11px;
}

.modal_body {
  display: flex;
  gap: 27px;
  padding: 21px 17px;
}

.steps {
  flex: 1;
  display: flex;
  flex-direction: column;
}

.step {
  display: flex;
  gap: 11px;
  margin-bottom: 17px;
}

.step_num {
  display: flex;
  align-items: center;
  justify-content: center;
  flex: none;
  width: 24px;
  height: 24px;
  margin: 7px 0 0 1px;
  border-radius: 50%;
  background-color: #e6bd00;
  font-weight: 700;
  color: #fff;
}

.step_main {
  flex: 1;
}

.step_title {
  display: block;
  padding-top: 1px;
  font-size: 14px;
  font-weight: 500;
  line-height: 19px;
}

.step_sub {
  margin-bottom: 10px;
  line-height: 18px;
  color: #7a7f9a;
}

.name_field {
  position: relative;
}

.name_field::before {
  content: "";
  position: absolute;
  left: 11px;
  top: 11px;
  width: 1px;
  height: 14px;
  background-color: #03031a;
}

.name_field input {
  display: block;
  width: 100%;
  height: 37px;
  padding: 0 11px;
  border: 1px solid #e6bd00;
  border-radius: 4px;
  outline: 0;
  font-size: 12px;
}

input::placeholder {
  color: #7a7f9a;
}

.drop {
  padding: 6px 0;
  border: 2px dashed #d9dbe4;
  border-radius: 5px;
  text-align: center;
  line-height: 17px;
  color: #7a7f9a;
}

.drop_note {
  font-size: 11px;
  color: #a3a7ba;
}

.code {
  display: flex;
  align-items: center;
  gap: 11px;
}

.code_group {
  display: flex;
  border: 1px solid #dfe1f0;
  border-radius: 4px;
  box-shadow: 0 1px 2px rgba(60, 60, 120, 0.08);
}

.code_group input {
  width: 42px;
  height: 34px;
  padding: 0;
  border: 0;
  border-radius: 4px;
  text-align: center;
}

.code_group input:first-child,
.code_group input:last-child {
  width: 41px;
}

.code_group input + input {
  border-left: 1px solid #dfe1f0;
  border-radius: 0;
}

.code_dash {
  width: 16px;
  height: 2px;
  background-color: #03031a;
}

.help {
  margin-top: auto;
  font-size: 11px;
  line-height: 14px;
  color: #7a7f9a;
}

.help a {
  font-weight: 500;
  color: #e6bd00;
}

.map_col {
  width: 360px;
}

.map {
  position: relative;
  height: 350px;
  overflow: hidden;
  border: 2px solid #e4e7f1;
  border-radius: 8px;
}

.map_canvas {
  display: block;
  width: 100%;
  height: 100%;
}

.map_area,
.map_place,
.map_street,
.map_water {
  font-family: "Noto Sans", sans-serif;
  paint-order: stroke;
  stroke: #f5f5fa;
  stroke-width: 4px;
}

.map_area {
  font-size: 31px;
  letter-spacing: 4px;
  font-weight: 500;
  fill: #8a7968;
}

.map_place {
  font-family: Roboto, sans-serif;
  font-size: 34px;
  font-weight: 500;
  fill: #85745f;
}

.map_park {
  fill: #9b9a4b;
}

.map_street {
  font-family: Roboto, sans-serif;
  font-size: 32px;
  fill: #6c6c72;
}

.map_water {
  font-size: 36px;
  font-style: italic;
  letter-spacing: 4px;
  fill: #959cb3;
  stroke: none;
}

.coords {
  position: absolute;
  left: 13px;
  top: 13px;
  width: 280px;
  padding: 10px 11px;
  border-radius: 5px;
  background-color: rgba(255, 255, 255, 0.6);
  backdrop-filter: blur(8px);
  box-shadow: 0 4px 10px rgba(40, 40, 80, 0.25);
}

.coords_title {
  display: flex;
  align-items: center;
  gap: 7px;
  height: 16px;
  margin-bottom: 8px;
  font-weight: 500;
}

.coords_title .line_icon {
  width: 13px;
  height: 13px;
  color: #3a3a4c;
}

.coords_row {
  display: flex;
  gap: 8px;
}

.coords_row label {
  flex: 1;
  min-width: 0;
  font-size: 11px;
  line-height: 16px;
  color: #5d6072;
}

.coords_row input {
  display: block;
  width: 100%;
  height: 28px;
  margin-top: 3px;
  padding: 0 10px;
  border: 1px solid #e6e8f2;
  border-radius: 4px;
  background-color: #fff;
  font-size: 12px;
}

.map_controls {
  position: absolute;
  top: 10px;
  right: 10px;
  display: flex;
  flex-direction: column;
  gap: 10px;
}

.map_group {
  overflow: hidden;
  border-radius: 4px;
  background-color: #fff;
  box-shadow: 0 0 0 2px rgba(0, 0, 0, 0.1);
}

.map_group button {
  display: block;
  width: 29px;
  height: 29px;
  border: 0;
  padding: 0;
  background-color: #fff;
}

.map_group button + button {
  border-top: 1px solid #ddd;
}

.map_group svg {
  display: block;
  width: 29px;
  height: 28px;
  fill: #333;
}

.map_hint {
  margin-top: 10px;
  font-size: 11px;
  line-height: 14px;
  text-align: center;
  color: #7a7f9a;
}
</style>
